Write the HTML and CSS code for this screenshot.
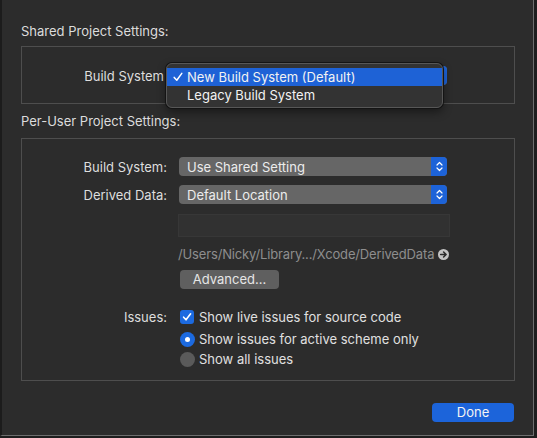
FILE: index.html
```html
<!DOCTYPE html>
<html>
<head>
<meta charset="utf-8">
<link rel="stylesheet" href="styles.css">
</head>
<body>
<div class="window">
  <div class="heading h1">Shared Project Settings:</div>
  <div class="box box-shared">
    <div class="row">
      <div class="label label-covered">Build System</div>
      <div class="popup">
        <span class="popup-text">New Build System (Default)</span>
        <span class="stepper"><svg width="7" height="11" viewBox="0 0 7 11"><path d="M1 4 L3.5 1.5 L6 4 M1 7 L3.5 9.5 L6 7" fill="none" stroke="#fff" stroke-width="1.2" stroke-linecap="round" stroke-linejoin="round"/></svg></span>
      </div>
    </div>
    <div class="menu">
      <div class="menu-item selected">
        <svg class="check" width="10" height="10" viewBox="0 0 10 10"><path d="M1.2 5.4 L3.8 8.2 L8.8 1.4" fill="none" stroke="#fff" stroke-width="1.5" stroke-linecap="round" stroke-linejoin="round"/></svg>
        <span>New Build System (Default)</span>
      </div>
      <div class="menu-item"><span>Legacy Build System</span></div>
    </div>
  </div>

  <div class="heading h2">Per-User Project Settings:</div>
  <div class="box box-user">
    <div class="row r1">
      <div class="label">Build System:</div>
      <div class="popup">
        <span class="popup-text">Use Shared Setting</span>
        <span class="stepper"><svg width="7" height="11" viewBox="0 0 7 11"><path d="M1 4 L3.5 1.5 L6 4 M1 7 L3.5 9.5 L6 7" fill="none" stroke="#fff" stroke-width="1.2" stroke-linecap="round" stroke-linejoin="round"/></svg></span>
      </div>
    </div>
    <div class="row r2">
      <div class="label">Derived Data:</div>
      <div class="popup">
        <span class="popup-text">Default Location</span>
        <span class="stepper"><svg width="7" height="11" viewBox="0 0 7 11"><path d="M1 4 L3.5 1.5 L6 4 M1 7 L3.5 9.5 L6 7" fill="none" stroke="#fff" stroke-width="1.2" stroke-linecap="round" stroke-linejoin="round"/></svg></span>
      </div>
    </div>
    <div class="row r3">
      <div class="label"></div>
      <div class="textfield"></div>
    </div>
    <div class="row r4">
      <div class="label"></div>
      <div class="path">
        <span class="path-text">/Users/Nicky/Library.../Xcode/DerivedData</span>
        <svg class="go" width="11" height="11" viewBox="0 0 11 11"><circle cx="5.5" cy="5.5" r="5.5" fill="#c4c4c4"/><path d="M2.6 5.5 H8 M5.6 3 L8.1 5.5 L5.6 8" fill="none" stroke="#2b2b2b" stroke-width="1.5" stroke-linecap="round" stroke-linejoin="round"/></svg>
      </div>
    </div>
    <div class="row r5">
      <div class="label"></div>
      <div class="button">Advanced...</div>
    </div>
    <div class="row r6">
      <div class="label">Issues:</div>
      <div class="option">
        <span class="checkbox"><svg width="10" height="10" viewBox="0 0 10 10"><path d="M1.6 5.2 L4 7.8 L8.6 1.8" fill="none" stroke="#fff" stroke-width="1.6" stroke-linecap="round" stroke-linejoin="round"/></svg></span>
        <span>Show live issues for source code</span>
      </div>
    </div>
    <div class="row r7">
      <div class="label"></div>
      <div class="option">
        <span class="radio on"></span>
        <span>Show issues for active scheme only</span>
      </div>
    </div>
    <div class="row r8">
      <div class="label"></div>
      <div class="option">
        <span class="radio"></span>
        <span>Show all issues</span>
      </div>
    </div>
  </div>
  <div class="footer">
    <div class="done">Done</div>
  </div>
</div>
</body>
</html>
```

FILE: styles.css
```css
html, body {
  margin: 0;
  padding: 0;
  background: #1e1e1e;
}
body {
  width: 537px;
  height: 438px;
  overflow: hidden;
  font-family: "Inter", "Liberation Sans", sans-serif;
  font-size: 13px;
  color: #dedede;
}
.window {
  box-sizing: border-box;
  width: 534px;
  height: 436px;
  background: #2c2c2c;
  border-left: 2px solid #1c1c1c;
  border-right: 1px solid #6e6e6e;
  border-bottom: 1px solid #6e6e6e;
  padding: 0 19px 0 19px;
  display: flex;
  flex-direction: column;
}
.heading {
  line-height: 16px;
  height: 16px;
  color: #dcdcdc;
}
.h1 { margin-top: 23px; }
.h2 { margin-top: 9px; }
.box {
  position: relative;
  box-sizing: border-box;
  width: 494px;
  border: 1px solid #4e4e4e;
  margin-top: 7px;
}
.box-shared {
  height: 58px;
  padding-top: 19px;
}
.box-user {
  height: 243px;
  padding-top: 18px;
  margin-top: 9px;
}
.row {
  display: flex;
  align-items: center;
  column-gap: 12px;
}
.label {
  box-sizing: border-box;
  width: 145px;
  flex: none;
  text-align: right;
  line-height: 16px;
}
.label-covered {
  padding-right: 3px;
}
.popup {
  position: relative;
  box-sizing: border-box;
  width: 268px;
  height: 19px;
  border-radius: 4px;
  background: #666666;
  display: flex;
  align-items: center;
  padding-left: 8px;
  color: #ececec;
  line-height: 16px;
}
.popup-text { flex: 1; }
.stepper {
  width: 16px;
  height: 19px;
  background: #1d63d8;
  border-radius: 0 4px 4px 0;
  display: flex;
  align-items: center;
  justify-content: center;
}
.r2 { margin-top: 9px; }
.r3 { margin-top: 10px; }
.textfield {
  box-sizing: border-box;
  width: 272px;
  height: 23px;
  margin-left: -1px;
  background: #313131;
  border: 1px solid #373737;
}
.r4 { margin-top: 9px; }
.path {
  display: flex;
  align-items: center;
  margin-left: -1px;
  color: #8e8e8e;
  line-height: 16px;
}
.path-text { letter-spacing: -0.15px; }
.go { margin-left: 4px; margin-top: 1px; }
.r5 { margin-top: 8px; }
.button {
  margin-left: 1px;
  width: 99px;
  height: 19px;
  border-radius: 4px;
  background: #5f5f5f;
  color: #e6e6e6;
  text-align: center;
  line-height: 19px;
}
.r6 { margin-top: 20px; }
.option {
  display: flex;
  align-items: center;
  column-gap: 5px;
  line-height: 16px;
  color: #e0e0e0;
  margin-left: 1px;
}
.checkbox {
  box-sizing: border-box;
  width: 14px;
  height: 14px;
  border-radius: 3px;
  background: #1c6ae0;
  display: flex;
  align-items: center;
  justify-content: center;
}
.radio {
  box-sizing: border-box;
  width: 15px;
  height: 15px;
  border-radius: 50%;
  background: #5a5a5a;
  margin-right: -1px;
  position: relative;
}
.radio.on {
  background: #1c6ae0;
}
.radio.on::after {
  content: "";
  position: absolute;
  left: 5px;
  top: 5px;
  width: 5px;
  height: 5px;
  border-radius: 50%;
  background: #fff;
}
.r7 { margin-top: 6px; }
.r8 { margin-top: 4px; }
.menu {
  position: absolute;
  left: 144px;
  top: 16px;
  box-sizing: border-box;
  width: 277px;
  height: 45px;
  border-radius: 6px;
  background: #333333;
  border: 1px solid #575757;
  box-shadow: 0 0 0 1px #141414, 0 4px 10px rgba(0,0,0,0.45);
  padding-top: 4px;
}
.menu-item {
  height: 18px;
  display: flex;
  align-items: center;
  padding-left: 20px;
  position: relative;
  color: #f2f2f2;
  line-height: 18px;
}
.menu-item.selected {
  background: #1e62d6;
}
.check {
  position: absolute;
  left: 6px;
  top: 4px;
}
.footer {
  display: flex;
  justify-content: flex-end;
  margin-top: 22px;
}
.done {
  width: 82px;
  height: 19px;
  border-radius: 4px;
  background: #1c64da;
  color: #f4f4f4;
  text-align: center;
  line-height: 19px;
}
```
